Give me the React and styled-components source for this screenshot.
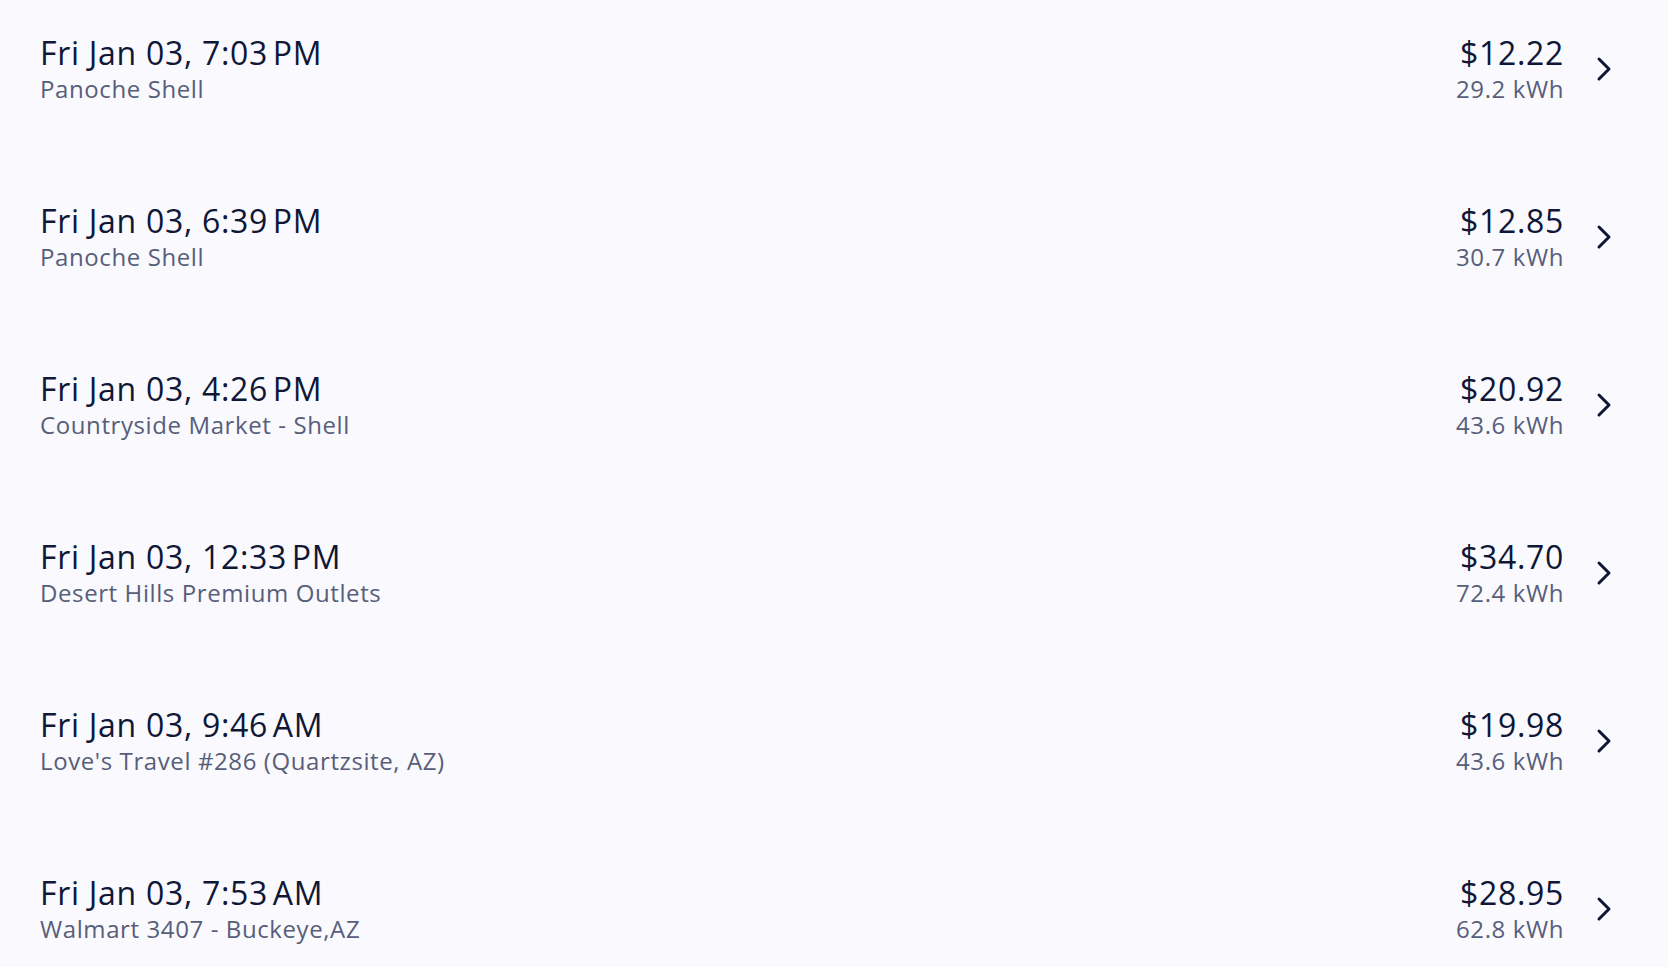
import React from "react";
import styled, { createGlobalStyle } from "styled-components";
import { ChevronRight } from "lucide-react";

const GlobalStyle = createGlobalStyle`
  html, body {
    margin: 0;
    padding: 0;
    background: #f9f9fe;
  }
  body {
    font-family: "Open Sans", "Noto Sans", sans-serif;
    -webkit-font-smoothing: antialiased;
  }
`;

const List = styled.ul`
  list-style: none;
  margin: 0;
  padding: 0;
  width: 100%;
  height: 967px;
  overflow: hidden;
  background: #f9f9fe;
`;

const Row = styled.li`
  height: 168px;
  box-sizing: border-box;
  padding: 33px 44px 0 40px;
  display: flex;
  align-items: flex-start;
  cursor: pointer;
`;

const Info = styled.div`
  flex: 1;
  display: flex;
  flex-direction: column;
  min-width: 0;
`;

const Amounts = styled.div`
  display: flex;
  flex-direction: column;
  align-items: flex-end;
  text-align: right;
`;

const Title = styled.div`
  font-size: 32px;
  line-height: 40px;
  letter-spacing: 0.7px;
  color: #0f1737;
  white-space: nowrap;
`;

const Sub = styled.div`
  font-size: 24px;
  line-height: 32px;
  letter-spacing: 0.6px;
  color: #585e7a;
  white-space: nowrap;
`;

const Arrow = styled.div`
  width: 40px;
  height: 72px;
  margin-left: 20px;
  display: flex;
  align-items: center;
  justify-content: center;
  color: #0f1737;
`;

const sessions = [
  { time: "Fri Jan 03, 7:03\u202FPM", place: "Panoche Shell", cost: "$12.22", energy: "29.2 kWh" },
  { time: "Fri Jan 03, 6:39\u202FPM", place: "Panoche Shell", cost: "$12.85", energy: "30.7 kWh" },
  { time: "Fri Jan 03, 4:26\u202FPM", place: "Countryside Market - Shell", cost: "$20.92", energy: "43.6 kWh" },
  { time: "Fri Jan 03, 12:33\u202FPM", place: "Desert Hills Premium Outlets", cost: "$34.70", energy: "72.4 kWh" },
  { time: "Fri Jan 03, 9:46\u202FAM", place: "Love's Travel #286 (Quartzsite, AZ)", cost: "$19.98", energy: "43.6 kWh" },
  { time: "Fri Jan 03, 7:53\u202FAM", place: "Walmart 3407 - Buckeye,AZ", cost: "$28.95", energy: "62.8 kWh" },
];

const App = () => {
  return (
    <>
      <GlobalStyle />
      <List>
        {sessions.map((s, i) => (
          <Row key={i}>
            <Info>
              <Title>{s.time}</Title>
              <Sub>{s.place}</Sub>
            </Info>
            <Amounts>
              <Title>{s.cost}</Title>
              <Sub>{s.energy}</Sub>
            </Amounts>
            <Arrow>
              <ChevronRight size={40} strokeWidth={1.8} />
            </Arrow>
          </Row>
        ))}
      </List>
    </>
  );
};

export default App;
